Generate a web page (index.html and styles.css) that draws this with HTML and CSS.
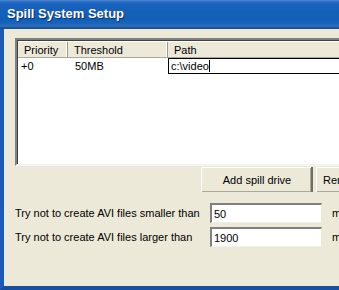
FILE: index.html
```html
<!DOCTYPE html>
<html lang="en">
<head>
    <meta charset="UTF-8">
    <link rel="stylesheet" href="styles.css">
    <title>Spill System Setup</title>
</head>
<body>
    <div class="window">
        <div class="titlebar">Spill System Setup</div>

        <div class="window-body">
            <!-- Spill drive list -->
            <div class="listview">
                <div class="lv-header">
                    <div class="lv-col col-priority">Priority</div>
                    <div class="lv-col col-threshold">Threshold</div>
                    <div class="lv-col col-path">Path</div>
                </div>
                <div class="lv-row">
                    <div class="lv-cell col-priority">+0</div>
                    <div class="lv-cell col-threshold">50MB</div>
                    <div class="lv-cell col-path">
                        <div class="cell-edit">c:\video<span class="caret"></span></div>
                    </div>
                </div>
            </div>

            <div class="button-row">
                <button class="btn btn-add">Add spill drive</button>
                <button class="btn btn-remove">Remove spill drive</button>
            </div>

            <div class="form-row">
                <label class="form-label">Try not to create AVI files smaller than</label>
                <input type="text" class="form-input" value="50">
                <span class="form-unit">megabytes</span>
            </div>
            <div class="form-row">
                <label class="form-label">Try not to create AVI files larger than</label>
                <input type="text" class="form-input" value="1900">
                <span class="form-unit">megabytes</span>
            </div>
        </div>
    </div>
</body>
</html>
```

FILE: styles.css
```css
/* Dialog fills the viewport and is cut at the right edge */
html, body {
    margin: 0;
    width: 339px;
    height: 290px;
    overflow: hidden;
    background-color: #ece9d8;
    font-family: "Liberation Sans", Arial, sans-serif;
    font-size: 11px;
}

.window {
    width: 440px;
    height: 290px;
    display: flex;
    flex-direction: column;
}

/* XP style caption */
.titlebar {
    height: 29px;
    flex: none;
    box-sizing: border-box;
    padding: 0 0 2px 7px;
    display: flex;
    align-items: center;
    color: #fff;
    font-weight: bold;
    font-size: 13px;
    text-shadow: 1px 1px 0 #0a2f70;
    background: linear-gradient(to bottom,
        #4a86d0 0px, #2a6cc4 2px, #1a62bd 4px, #1360b8 12px,
        #1160b6 20px, #1a66be 24px, #2f6fbc 26px, #1c4f92 28px);
}

.window-body {
    flex: 1;
    box-sizing: border-box;
    border-left: 4px solid #1a5bb5;
    border-bottom: 4px solid #1a4fa0;
    padding: 9px 0 0 11px;
    background-color: #ece9d8;
}

/* List view */
.listview {
    height: 128px;
    box-sizing: border-box;
    background-color: #fff;
    border-top: 2px solid #808080;
    border-left: 2px solid #808080;
    border-bottom: 2px solid #f5f4ee;
    box-shadow: inset 1px 1px 0 #404040;
    padding: 2px 0 0 1px;
}

.lv-header {
    display: flex;
    height: 16px;
}

.lv-col {
    box-sizing: border-box;
    background-color: #ece9d8;
    border-right: 1px solid #9d9a8c;
    border-bottom: 1px solid #aca899;
    box-shadow: inset -1px 0 0 #fff;
    padding: 2px 0 0 6px;
    color: #000;
}

.col-priority { width: 50px; }
.col-threshold { width: 100px; }
.col-path { width: 260px; }

.lv-row {
    display: flex;
    height: 16px;
}

.lv-cell {
    box-sizing: border-box;
    padding: 2px 0 0 3px;
}

.lv-cell.col-threshold { padding-left: 7px; }

.lv-cell.col-path {
    padding: 0;
}

.cell-edit {
    box-sizing: border-box;
    height: 16px;
    border: 1px solid #000;
    padding: 1px 0 0 2px;
}

.caret {
    display: inline-block;
    width: 1px;
    height: 12px;
    background-color: #000;
    vertical-align: -2px;
}

/* Buttons below the list */
.button-row {
    display: flex;
    gap: 3px;
    padding: 1px 0 0 186px;
}

.btn {
    width: 112px;
    height: 25px;
    flex: none;
    font-family: "Liberation Sans", Arial, sans-serif;
    font-size: 11px;
    color: #000;
    background-color: #ece9d8;
    border: none;
    border-right: 2px solid #716f64;
    box-shadow: inset 1px 1px 0 #fff, inset -1px -1px 0 #aca899;
    padding: 0 0 0 2px;
}

.btn-remove {
    width: 120px;
    text-align: left;
    padding-left: 7px;
}

/* Size limits */
.form-row {
    display: flex;
    align-items: center;
    height: 20px;
    margin-top: 4px;
}

.button-row + .form-row {
    margin-top: 11px;
}

.form-label {
    width: 195px;
    flex: none;
}

.form-input {
    width: 112px;
    height: 20px;
    box-sizing: border-box;
    margin: 0;
    padding: 1px 2px 0;
    font-family: "Liberation Sans", Arial, sans-serif;
    font-size: 11px;
    border-top: 2px solid #808080;
    border-left: 2px solid #808080;
    border-right: 1px solid #ece9d8;
    border-bottom: 1px solid #f0efe8;
    background-color: #fff;
    outline: none;
}

.form-unit {
    margin-left: 10px;
}
```
